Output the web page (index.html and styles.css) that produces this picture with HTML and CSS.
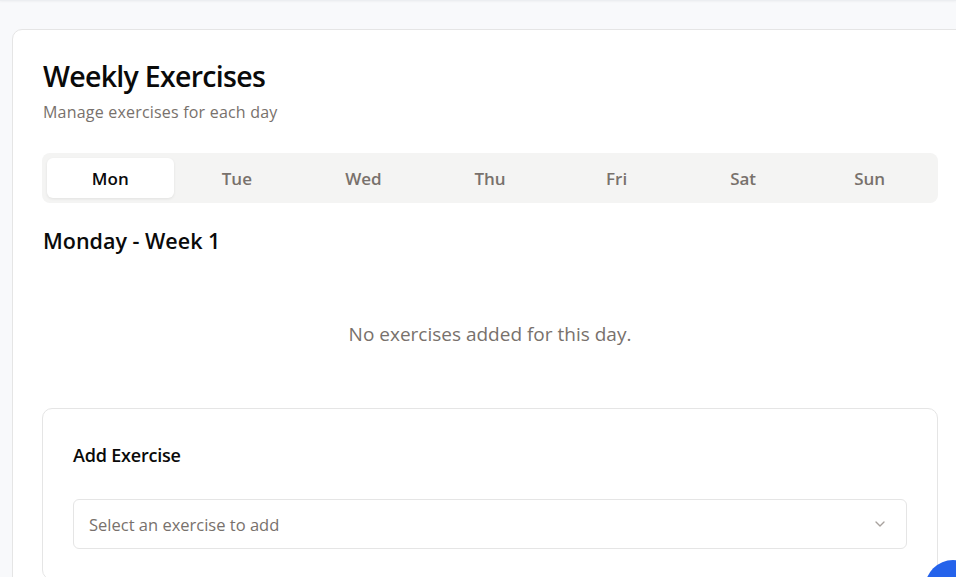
FILE: index.html
```html
<!DOCTYPE html>
<html>
<head>
<meta charset="utf-8">
<link rel="stylesheet" href="styles.css">
</head>
<body>
<div class="topbar"></div>
<main class="page">
  <section class="card">
    <h1 class="title">Weekly Exercises</h1>
    <p class="subtitle">Manage exercises for each day</p>
    <div class="tabs">
      <button class="tab active">Mon</button>
      <button class="tab">Tue</button>
      <button class="tab">Wed</button>
      <button class="tab">Thu</button>
      <button class="tab">Fri</button>
      <button class="tab">Sat</button>
      <button class="tab">Sun</button>
    </div>
    <h2 class="day-title">Monday - Week 1</h2>
    <p class="empty">No exercises added for this day.</p>
    <div class="add-card">
      <h3 class="add-title">Add Exercise</h3>
      <div class="select">
        <span class="placeholder">Select an exercise to add</span>
        <svg class="chevron" width="16" height="16" viewBox="0 0 24 24" fill="none" stroke="currentColor" stroke-width="2" stroke-linecap="round" stroke-linejoin="round"><path d="m6 9 6 6 6-6"/></svg>
      </div>
    </div>
  </section>
</main>
<button class="fab" aria-label="Action"></button>
</body>
</html>
```
FILE: styles.css
```css
html, body {
  margin: 0;
  padding: 0;
  overflow: hidden;
  height: 100%;
}
body {
  background: #f8f9fb;
  font-family: "Open Sans", "Noto Sans", sans-serif;
  color: #0a0a0a;
}
.topbar {
  height: 1px;
  background: #eceef1;
  box-shadow: 0 1px 2px rgba(0,0,0,0.05);
}
.page {
  padding: 28px 0 0 12px;
}
.card {
  width: 896px;
  background: #fff;
  border: 1px solid #e5e5e5;
  border-radius: 10px;
  padding: 28px 30px 40px 29px;
  margin: 0;
}
.title {
  margin: 0;
  padding-left: 1px;
  font-size: 28.5px;
  line-height: 36px;
  font-weight: 600;
  letter-spacing: -0.7px;
}
.subtitle {
  margin: 6px 0 0;
  padding-left: 1px;
  font-size: 16px;
  line-height: 24px;
  letter-spacing: 0.2px;
  color: #78716c;
}
.tabs {
  margin-top: 29px;
  background: #f4f4f3;
  border-radius: 8px;
  padding: 5px;
  display: grid;
  grid-template-columns: repeat(7, 1fr);
  height: 40px;
}
.tab {
  border: 0;
  background: transparent;
  font-family: inherit;
  font-size: 17px;
  font-weight: 600;
  color: #78716c;
  border-radius: 6px;
  padding: 0;
}
.tab.active {
  background: #fff;
  color: #0a0a0a;
  box-shadow: 0 1px 3px rgba(0,0,0,0.08);
}
.day-title {
  margin: 24px 0 0;
  padding-left: 1px;
  font-size: 21.5px;
  line-height: 28px;
  font-weight: 600;
}
.empty {
  margin: 0;
  padding: 65px 0 60px;
  text-align: center;
  font-size: 19px;
  line-height: 28px;
  color: #78716c;
}
.add-card {
  border: 1px solid #e5e5e5;
  border-radius: 10px;
  padding: 34px 30px 30px;
}
.add-title {
  margin: 0;
  font-size: 18px;
  line-height: 24px;
  font-weight: 600;
  letter-spacing: -0.2px;
}
.select {
  box-sizing: border-box;
  margin-top: 32px;
  height: 50px;
  border: 1px solid #e5e5e5;
  border-radius: 6px;
  display: flex;
  align-items: center;
  justify-content: space-between;
  padding: 0 16px 0 15px;
}
.placeholder {
  font-size: 16.5px;
  color: #78716c;
}
.chevron {
  color: #a8a29e;
  margin-right: 2px;
}
.fab {
  position: fixed;
  left: 925px;
  top: 560px;
  width: 56px;
  height: 56px;
  border-radius: 50%;
  border: 0;
  background: #2563eb;
}
```
